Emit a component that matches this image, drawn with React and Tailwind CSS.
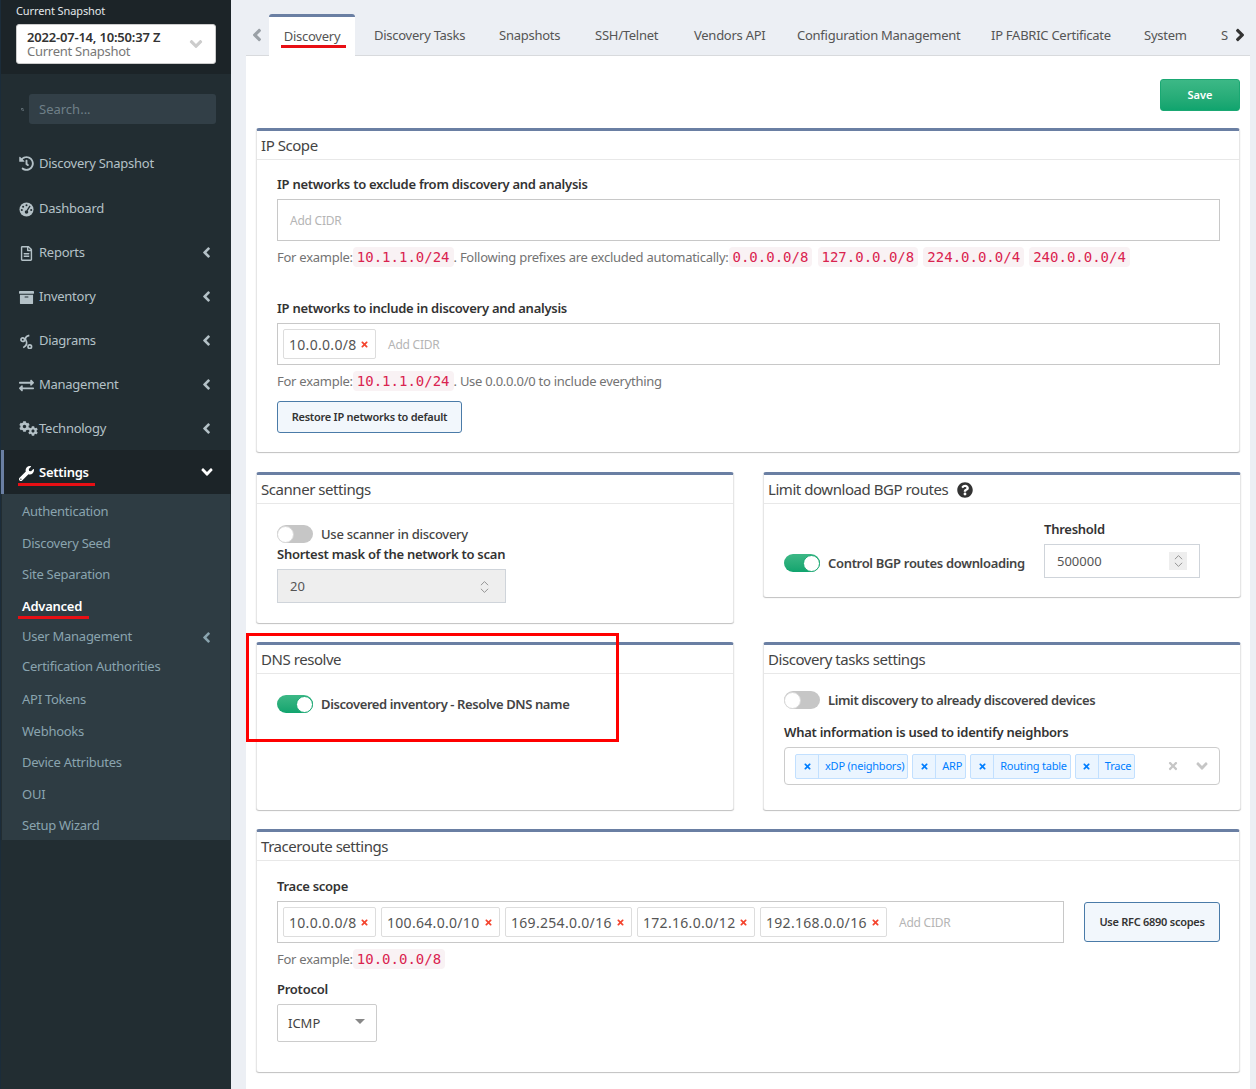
import React from 'react';
import { FaHistory, FaRegFileAlt, FaArchive, FaExchangeAlt, FaCog, FaWrench, FaQuestionCircle, FaAngleLeft, FaAngleRight, FaAngleDown, FaSearch, FaTimes } from 'react-icons/fa';

const DiagramIcon = ({ className }) => (
  <svg viewBox="0 0 14 16" className={className} fill="none" stroke="currentColor" strokeWidth="1.8">
    <circle cx="3" cy="6" r="1.9" />
    <circle cx="10.5" cy="13.5" r="1.9" />
    <path d="M10 1.5 C6 2.5 5 4.5 6.5 7 C8 9.5 7.5 12 3.5 14.5" />
  </svg>
);

const GaugeIcon = ({ className }) => (
  <svg viewBox="0 0 16 16" className={className}>
    <circle cx="8" cy="8" r="7.5" fill="currentColor" />
    <circle cx="8" cy="3.4" r="1.1" fill="#222d32" />
    <circle cx="4.4" cy="5" r="1.1" fill="#222d32" />
    <circle cx="3" cy="8.6" r="1.1" fill="#222d32" />
    <circle cx="13" cy="8.6" r="1.1" fill="#222d32" />
    <path d="M11.8 4.2L8.6 9.2" stroke="#222d32" strokeWidth="1.4" />
    <circle cx="8" cy="10.6" r="1.9" fill="#222d32" />
  </svg>
);

const GearsIcon = () => (
  <span className="flex w-[20px] -mt-[2px]">
    <FaCog className="w-[11px] h-[11px] shrink-0" />
    <FaCog className="w-[10px] h-[10px] shrink-0 mt-[5px] -ml-[2px]" />
  </span>
);

const navItems = [
  { label: 'Discovery Snapshot', icon: FaHistory, row: 'h-[45px]' },
  { label: 'Dashboard', icon: GaugeIcon, row: 'h-[44px] pt-[2px]' },
  { label: 'Reports', icon: FaRegFileAlt, row: 'h-[44px] pt-[2px]', arrow: true },
  { label: 'Inventory', icon: FaArchive, row: 'h-[44px] pt-[2px]', arrow: true },
  { label: 'Diagrams', icon: DiagramIcon, row: 'h-[44px] pt-[2px]', arrow: true },
  { label: 'Management', icon: FaExchangeAlt, row: 'h-[44px] pt-[2px]', arrow: true },
  { label: 'Technology', row: 'h-[44px] pt-[2px]', arrow: true, gears: true },
];

const subItems = [
  { label: 'Authentication', row: 'h-[32px]' },
  { label: 'Discovery Seed', row: 'h-[32px]' },
  { label: 'Site Separation', row: 'h-[30px]' },
  { label: 'Advanced', row: 'h-[34px]', active: true },
  { label: 'User Management', row: 'h-[26px]', arrow: true },
  { label: 'Certification Authorities', row: 'h-[34px]' },
  { label: 'API Tokens', row: 'h-[32px]' },
  { label: 'Webhooks', row: 'h-[32px]' },
  { label: 'Device Attributes', row: 'h-[30px]' },
  { label: 'OUI', row: 'h-[34px]' },
  { label: 'Setup Wizard', row: 'h-[28px]' },
];

const tabs = [
  { label: 'Discovery Tasks', w: 'w-[125px]' },
  { label: 'Snapshots', w: 'w-[96px]' },
  { label: 'SSH/Telnet', w: 'w-[99px]' },
  { label: 'Vendors API', w: 'w-[103px]' },
  { label: 'Configuration Management', w: 'w-[194px]' },
  { label: 'IP FABRIC Certificate', w: 'w-[153px]' },
  { label: 'System', w: 'w-[77px]' },
];

const traceScopes = [
  { text: '10.0.0.0/8', w: 'w-[93px]' },
  { text: '100.64.0.0/10', w: 'w-[119px]' },
  { text: '169.254.0.0/16', w: 'w-[127px]' },
  { text: '172.16.0.0/12', w: 'w-[118px]' },
  { text: '192.168.0.0/16', w: 'w-[127px]' },
];

const Sidebar = () => (
  <aside className="w-[231px] shrink-0 bg-[#222d32] border-l border-[#1b2c3a] flex flex-col min-h-[1089px]">
    <div className="h-[74px] bg-[#1c2428] pl-[15px] pr-[15px] pt-[3px]">
      <div className="text-[11px] leading-[15px] text-[#e4e8ea] tracking-[-0.01em]">Current Snapshot</div>
      <div className="mt-[6px] h-[40px] bg-white rounded-[3px] border border-[#ccc] flex items-center pl-[10px] pr-[9px]">
        <div className="flex-1 leading-[14px]">
          <div className="text-[13px] font-semibold text-[#333] tracking-[-0.015em]">2022-07-14, 10:50:37 Z</div>
          <div className="text-[13px] text-[#777] tracking-[-0.02em]">Current Snapshot</div>
        </div>
        <FaAngleDown className="text-[#ccc] text-[20px]" />
      </div>
    </div>

    <div className="h-[67px] flex items-center pl-[20px] pr-[15px] pt-[3px]">
      <FaSearch className="text-[#7c8a91] text-[3px] mr-[5px]" />
      <div className="flex-1 h-[30px] bg-[#323f47] rounded-[3px] flex items-center pl-[10px] pt-[2px] text-[13px] text-[#6f7f87]">Search...</div>
    </div>

    <nav className="flex flex-col">
      {navItems.map((item) => {
        const Icon = item.icon;
        return (
          <div key={item.label} className={`${item.row} flex items-center pl-[18px] pr-[16px] text-[13px] tracking-[-0.02em] text-[#b4c1c7]`}>
            <span className="w-[20px] shrink-0">
              {item.gears ? <GearsIcon /> : <Icon className="w-[15px] h-[15px]" />}
            </span>
            <span className="flex-1">{item.label}</span>
            {item.arrow && <FaAngleLeft className="text-[17px] -mt-[2px]" />}
          </div>
        );
      })}
      <div className="h-[44px] pt-[2px] bg-[#1c2428] border-l-[3px] border-[#6a7fa3] relative flex items-center pl-[15px] pr-[15px] text-[13px] font-semibold tracking-[-0.02em] text-white">
        <span className="w-[20px] shrink-0"><FaWrench className="w-[15px] h-[15px]" /></span>
        <span className="flex-1">Settings</span>
        <FaAngleDown className="text-[18px] -mt-[2px]" />
        <span className="absolute left-[14px] top-[33px] w-[77px] h-[3px] bg-[#e80f14]" />
      </div>
      <div className="bg-[#2e3c43] ml-px mr-px h-[346px] pt-[2px]">
        {subItems.map((item) => (
          <div key={item.label} className={`${item.row} relative flex items-center pl-[20px] pr-[15px] text-[13px] tracking-[-0.02em] ${item.active ? 'font-semibold text-white' : 'text-[#8aa4af]'}`}>
            <span className="flex-1">{item.label}</span>
            {item.arrow && <FaAngleLeft className="text-[17px]" />}
            {item.active && <span className="absolute left-[16px] top-[26px] w-[71px] h-[3px] bg-[#e80f14]" />}
          </div>
        ))}
      </div>
    </nav>
  </aside>
);

const Card = ({ title, extra, className = '', children }) => (
  <section className={`bg-white rounded-[3px] border-x border-[#e6e6e6] border-t-[3px] border-t-[#6a7fa3] shadow-[0_1px_1px_rgba(0,0,0,0.25)] ${className}`}>
    <h3 className="h-[29px] pt-[1px] border-b border-[#e8e8e8] pl-[4px] flex items-center text-[15px] tracking-[-0.03em] text-[#444] gap-[9px]">
      {title}
      {extra}
    </h3>
    {children}
  </section>
);

const Label = ({ className = '', children }) => (
  <div className={`text-[13px] leading-[18px] font-semibold tracking-[-0.02em] text-[#333] ${className}`}>{children}</div>
);

const Code = ({ className = '', children }) => (
  <code className={`font-['DejaVu_Sans_Mono',monospace] text-[14px] text-[#d9234f] bg-[#f9f2f4] rounded-[4px] px-[4px] py-[2px] tracking-normal ${className}`}>{children}</code>
);

const Hint = ({ className = '', children }) => (
  <div className={`text-[13px] leading-[20px] tracking-[-0.02em] text-[#737373] ${className}`}>{children}</div>
);

const Tag = ({ w, children }) => (
  <span className={`${w} h-[30px] shrink-0 flex items-center justify-between border border-[#ddd] rounded-[2px] pl-[5px] pr-[6px] text-[14px] tracking-[0.3px] text-[#555]`}>
    {children}
    <FaTimes className="w-[9px] h-[9px] text-[#f4442e]" />
  </span>
);

const TagsInput = ({ tags = [], className = '' }) => (
  <div className={`border border-[#c8c8c8] flex items-center pl-[5px] gap-[5px] ${className}`}>
    {tags.map((t) => <Tag key={t.text} w={t.w}>{t.text}</Tag>)}
    <span className="ml-[7px] pt-[2px] text-[12px] tracking-[-0.02em] text-[#b5b5b5]">Add CIDR</span>
  </div>
);

const Toggle = ({ on }) => (
  <span className={`w-[36px] h-[18px] shrink-0 rounded-full flex items-center ${on ? 'justify-end bg-gradient-to-b from-[#3cb886] to-[#0fa46e]' : 'justify-start bg-[#c6c6c6]'}`}>
    <span className={`w-[17px] h-[17px] rounded-full bg-white border ${on ? 'border-[#1aa873]' : 'border-[#d8d8d8]'}`} />
  </span>
);

const OutlineButton = ({ className = '', children }) => (
  <button className={`bg-[#f2f7fc] border border-[#4a7ba8] rounded-[3px] text-[11px] font-semibold text-[#333] tracking-[-0.27px] ${className}`}>{children}</button>
);

const Spinner = ({ box }) => (
  <span className={`w-[18px] h-[18px] flex flex-col items-center justify-center ${box}`}>
    <svg viewBox="0 0 10 14" className="w-[9px] h-[14px]" fill="none" stroke="#8a8a8a" strokeWidth="1">
      <path d="M1 5l4-4 4 4" />
      <path d="M1 9l4 4 4-4" />
    </svg>
  </span>
);

const Chip = ({ children }) => (
  <span className="h-[25px] flex items-center border border-[#c2e0ff] bg-[#ebf5ff] rounded-[2px] text-[11px] tracking-[-0.02em] text-[#007eff]">
    <span className="w-[23px] h-full flex items-center justify-center border-r border-[#c2e0ff]">
      <FaTimes className="w-[9px] h-[9px]" />
    </span>
    <span className="pl-[6px] pr-[3px]">{children}</span>
  </span>
);

const Main = () => (
  <main className="flex-1 bg-[#eceff4] min-w-0 pl-[15px] pr-[6px]">
    <div className="h-[56px] flex items-end border-b border-[#d8dadd]">
      <FaAngleLeft className="text-[#9aa0a6] text-[20px] mb-[10px] ml-[1px] mr-[2px] shrink-0" />
      <div className="w-[86px] h-[42px] shrink-0 -mb-px bg-white border-t-[3px] border-[#6a7fa3] rounded-t-[3px] relative flex items-center justify-center text-[13px] tracking-[-0.02em] text-[#555]">
        Discovery
        <span className="absolute left-[12px] top-[28px] w-[65px] h-[3px] bg-[#e80f14]" />
      </div>
      <div className="flex flex-1 h-[42px] items-center pl-[4px] text-[13px] tracking-[-0.02em] text-[#555] overflow-hidden">
        {tabs.map((t) => (
          <span key={t.label} className={`${t.w} shrink-0 pl-[15px] pt-[3px]`}>{t.label}</span>
        ))}
        <span className="pl-[15px] pt-[3px]">S</span>
      </div>
      <FaAngleRight className="text-[#333] text-[20px] mb-[10px] shrink-0" />
    </div>

    <div className="bg-white pl-[10px] pr-[10px] pt-[23px] min-h-[1033px]">
      <div className="flex justify-end">
        <button className="w-[80px] h-[32px] rounded-[3px] border border-[#1aa873] bg-gradient-to-b from-[#3cb886] to-[#0fa46e] text-[11px] font-semibold text-white">Save</button>
      </div>

      <Card title="IP Scope" className="mt-[17px] h-[324px]">
        <div className="pl-[20px] pr-[19px] pt-[15px]">
          <Label>IP networks to exclude from discovery and analysis</Label>
          <TagsInput className="mt-[6px] h-[42px]" />
          <Hint className="mt-[6px]">
            For example:<Code>10.1.1.0/24</Code>. Following prefixes are excluded automatically:<Code>0.0.0.0/8</Code> <Code className="ml-[2px]">127.0.0.0/8</Code> <Code className="ml-[2px]">224.0.0.0/4</Code> <Code className="ml-[2px]">240.0.0.0/4</Code>
          </Hint>
          <Label className="mt-[32px]">IP networks to include in discovery and analysis</Label>
          <TagsInput tags={[traceScopes[0]]} className="mt-[6px] h-[42px]" />
          <Hint className="mt-[6px]">
            For example:<Code>10.1.1.0/24</Code>. Use 0.0.0.0/0 to include everything
          </Hint>
          <OutlineButton className="mt-[10px] w-[185px] h-[32px]">Restore IP networks to default</OutlineButton>
        </div>
      </Card>

      <div className="grid grid-cols-[478px_478px] gap-x-[29px] mt-[20px] items-start">
        <Card title="Scanner settings" className="h-[151px]">
          <div className="pl-[20px] pt-[21px]">
            <div className="flex items-center gap-[8px]">
              <Toggle />
              <span className="text-[13px] leading-[18px] font-medium tracking-[-0.02em] text-[#444]">Use scanner in discovery</span>
            </div>
            <Label className="mt-[2px]">Shortest mask of the network to scan</Label>
            <div className="mt-[6px] w-[229px] h-[34px] bg-[#eeeeee] border border-[#cfd4da] flex items-center pl-[12px] pr-[12px] pt-[1px] text-[13px] text-[#555]">
              <span className="flex-1">20</span>
              <Spinner />
            </div>
          </div>
        </Card>
        <Card
          title="Limit download BGP routes"
          extra={<FaQuestionCircle className="w-[16px] h-[16px] text-[#333]" />}
          className="h-[125px]"
        >
          <div className="pl-[20px] pr-[20px] pt-[16px] flex items-end">
            <div className="flex items-center gap-[8px] pb-[6px]">
              <Toggle on />
              <span className="text-[13px] leading-[18px] font-semibold tracking-[-0.025em] text-[#444]">Control BGP routes downloading</span>
            </div>
            <div className="ml-auto mr-[20px]">
              <Label>Threshold</Label>
              <div className="mt-[6px] w-[156px] h-[34px] border border-[#cfd4da] flex items-center pl-[12px] pr-[12px] text-[13px] text-[#555]">
                <span className="flex-1 pt-[2px]">500000</span>
                <Spinner box="bg-[#eeeeee]" />
              </div>
            </div>
          </div>
        </Card>
      </div>

      <div className="grid grid-cols-[478px_478px] gap-x-[29px] mt-[19px]">
        <Card title="DNS resolve" className="h-[168px]">
          <div className="pl-[20px] pt-[21px] flex items-center gap-[8px]">
            <Toggle on />
            <span className="text-[13px] leading-[18px] font-semibold tracking-[-0.03em] text-[#444]">Discovered inventory - Resolve DNS name</span>
          </div>
        </Card>
        <Card title="Discovery tasks settings" className="h-[168px]">
          <div className="pl-[20px] pr-[20px] pt-[17px]">
            <div className="flex items-center gap-[8px]">
              <Toggle />
              <span className="text-[13px] leading-[18px] font-semibold tracking-[-0.03em] text-[#444]">Limit discovery to already discovered devices</span>
            </div>
            <Label className="mt-[14px]">What information is used to identify neighbors</Label>
            <div className="mt-[6px] h-[38px] border border-[#ccc] rounded-[4px] flex items-center pl-[10px] pr-[8px] gap-[4px]">
              <Chip>xDP (neighbors)</Chip>
              <Chip>ARP</Chip>
              <Chip>Routing table</Chip>
              <Chip>Trace</Chip>
              <FaTimes className="ml-auto mr-[10px] text-[#c6c6c6] w-[12px] h-[12px]" />
              <FaAngleDown className="text-[#c6c6c6] text-[18px]" />
            </div>
          </div>
        </Card>
      </div>

      <Card title="Traceroute settings" className="mt-[19px] h-[243px]">
        <div className="pl-[20px] pr-[19px] pt-[16px]">
          <Label>Trace scope</Label>
          <div className="mt-[6px] flex items-center gap-[20px]">
            <TagsInput tags={traceScopes} className="w-[787px] h-[42px]" />
            <OutlineButton className="w-[136px] h-[40px]">Use RFC 6890 scopes</OutlineButton>
          </div>
          <Hint className="mt-[6px]">For example:<Code>10.0.0.0/8</Code></Hint>
          <Label className="mt-[11px]">Protocol</Label>
          <div className="mt-[6px] w-[100px] h-[38px] border border-[#ccc] rounded-[2px] flex items-center pl-[10px] pr-[11px] text-[13px] text-[#444]">
            <span className="flex-1 pt-[2px]">ICMP</span>
            <span className="w-0 h-0 mb-[4px] border-x-[5px] border-x-transparent border-t-[5px] border-t-[#888]" />
          </div>
        </div>
      </Card>
    </div>
  </main>
);

export default function App() {
  return (
    <div className="relative flex h-[1089px] overflow-hidden font-['Noto_Sans',sans-serif]">
      <Sidebar />
      <Main />
      {/* annotation box drawn over the DNS card */}
      <div className="absolute left-[246px] top-[633px] w-[373px] h-[109px] border-[3px] border-[#f00]" />
    </div>
  );
}
